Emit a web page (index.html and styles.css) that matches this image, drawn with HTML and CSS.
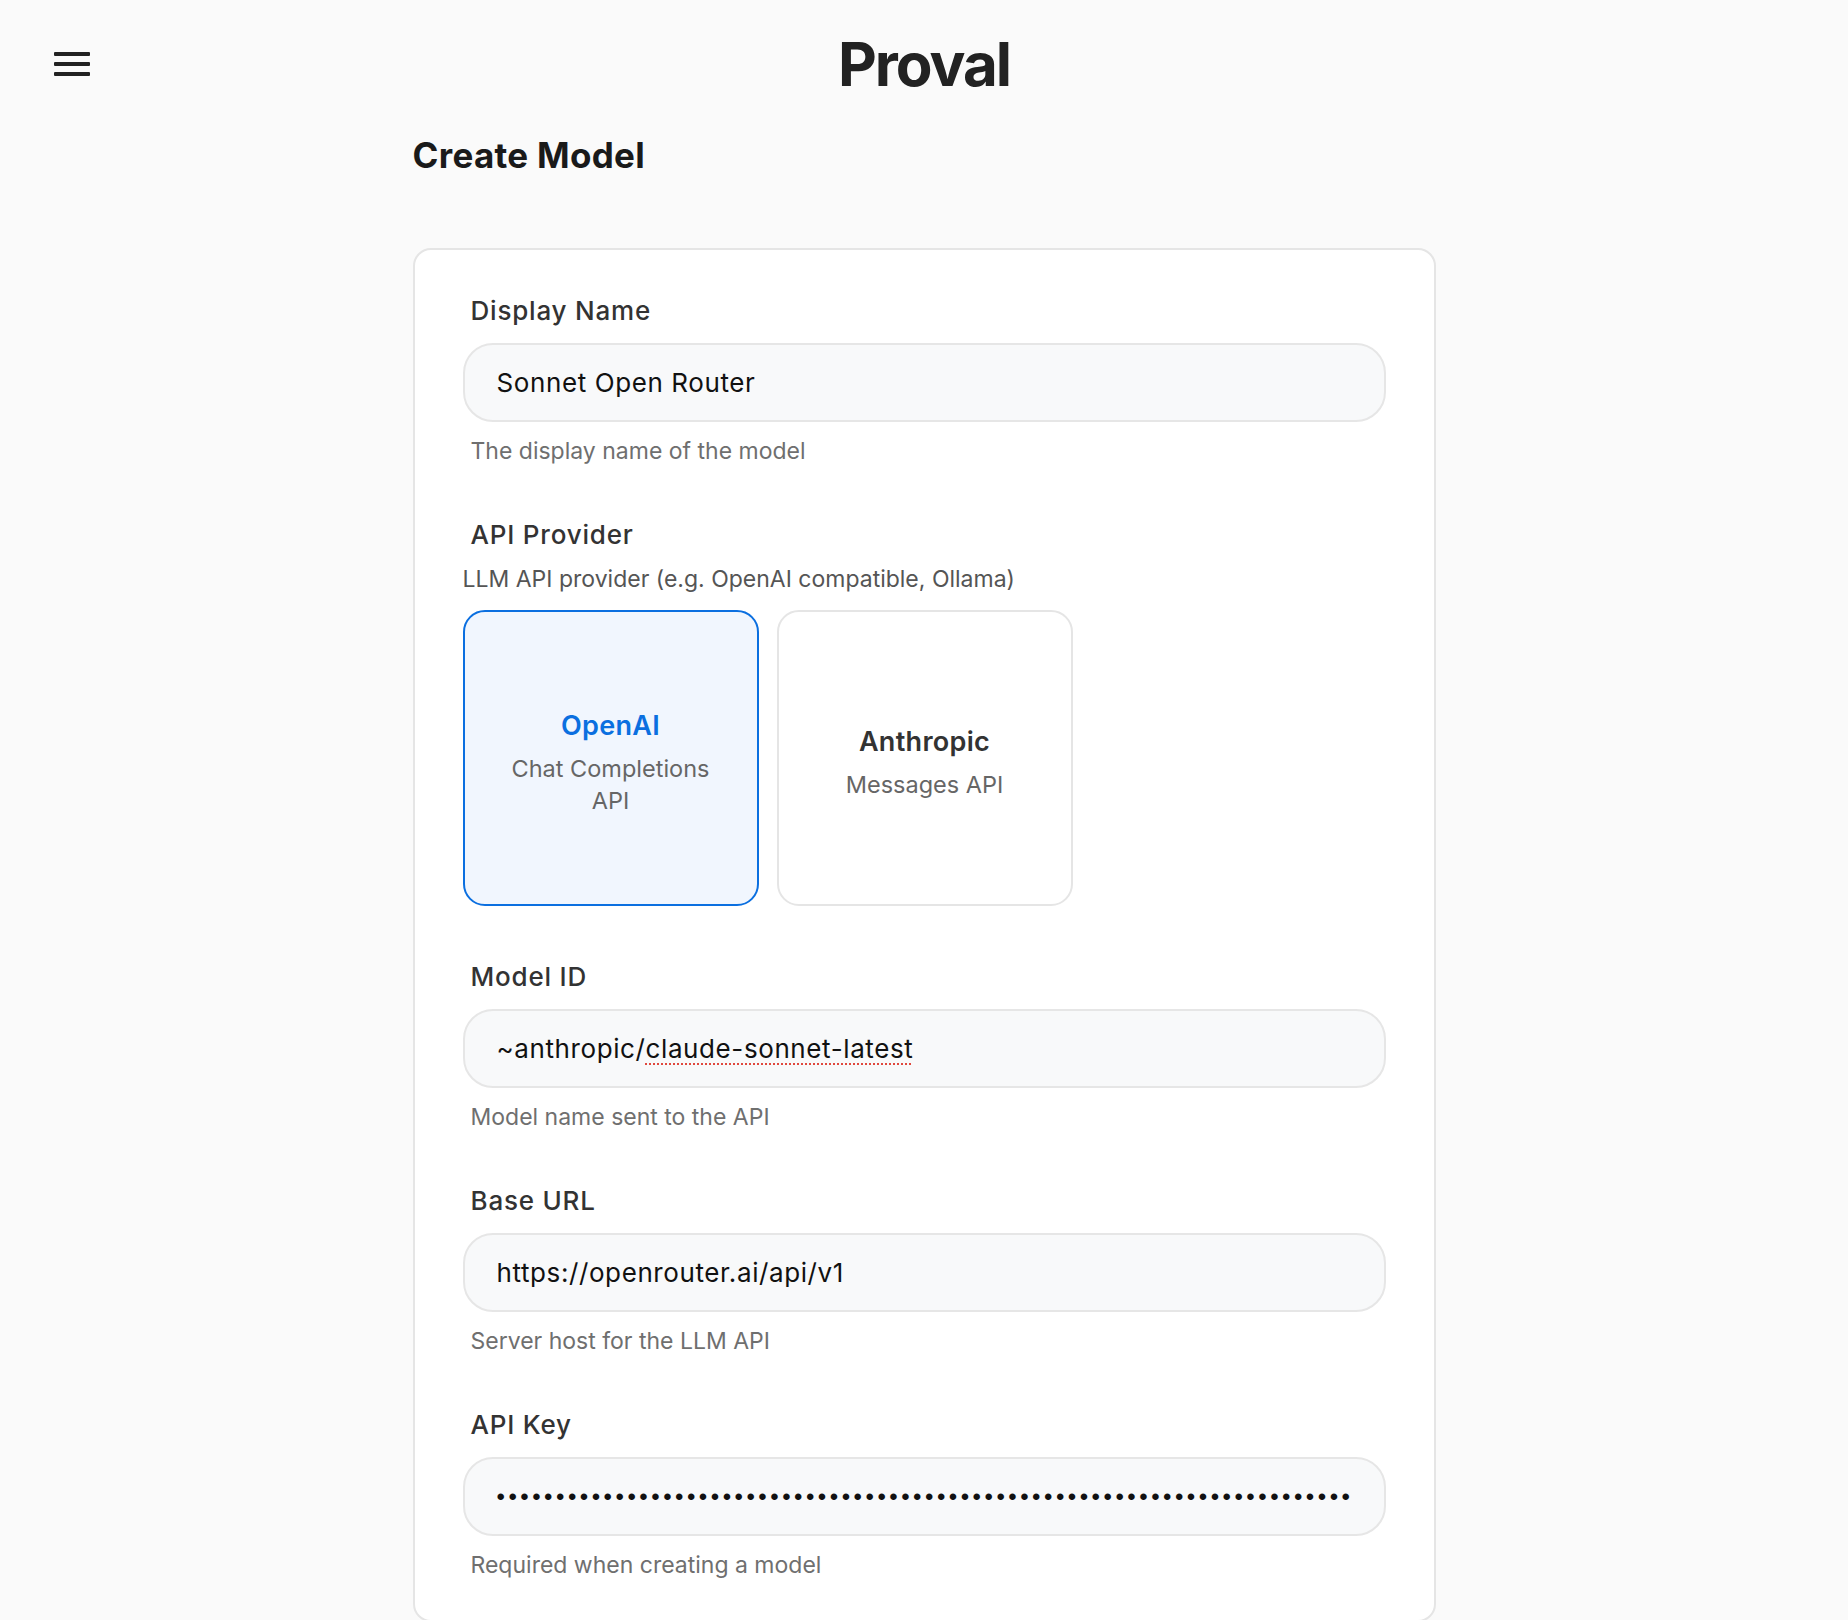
FILE: index.html
```html
<!DOCTYPE html>
<html lang="en">
<head>
  <meta charset="utf-8" />
  <meta name="viewport" content="width=device-width, initial-scale=1" />
  <title>Create Model - Proval</title>
  <link rel="stylesheet" href="styles.css">
</head>
<body>
<header class="topbar">
  <button class="menu-btn" type="button" aria-label="Menu">
    <svg width="36" height="24" viewBox="0 0 36 24" aria-hidden="true">
      <rect x="0" y="0" width="36" height="4" rx="1" />
      <rect x="0" y="10" width="36" height="4" rx="1" />
      <rect x="0" y="20" width="36" height="4" rx="1" />
    </svg>
  </button>
  <h1 class="brand">Proval</h1>
  <div></div>
</header>

<main class="page">
  <h2 class="page-title">Create Model</h2>

  <form class="form-card">
    <div class="field">
      <label class="field-label">Display Name</label>
      <div class="field-input">Sonnet Open Router</div>
      <p class="field-help">The display name of the model</p>
    </div>

    <div class="field">
      <label class="field-label">API Provider</label>
      <p class="field-desc">LLM API provider (e.g. OpenAI compatible, Ollama)</p>
      <div class="providers">
        <div class="provider provider--active">
          <span class="provider-name">OpenAI</span>
          <span class="provider-sub">Chat Completions API</span>
        </div>
        <div class="provider">
          <span class="provider-name">Anthropic</span>
          <span class="provider-sub">Messages API</span>
        </div>
      </div>
    </div>

    <div class="field">
      <label class="field-label">Model ID</label>
      <div class="field-input">~anthropic/<span class="misspelt">claude-sonnet-latest</span></div>
      <p class="field-help">Model name sent to the API</p>
    </div>

    <div class="field">
      <label class="field-label">Base URL</label>
      <div class="field-input">https://openrouter.ai/api/v1</div>
      <p class="field-help">Server host for the LLM API</p>
    </div>

    <div class="field">
      <label class="field-label">API Key</label>
      <div class="field-input field-input--secret">••••••••••••••••••••••••••••••••••••••••••••••••••••••••••••••••••••••••</div>
      <p class="field-help">Required when creating a model</p>
    </div>
  </form>
</main>
</body>
</html>
```

FILE: styles.css
```css
:root {
  --bg: #fafafa;
  --ink: #222;
  --label: #333;
  --muted: #6f6f6f;
  --line: #e5e5e5;
  --field: #f8f9fa;
  --blue: #0b6fe0;
  --blue-soft: #f1f6fe;
}
html {
  height: 100%;
}
body {
  margin: 0;
  background: var(--bg);
  color: var(--ink);
  font-family: Inter, "Noto Sans", sans-serif;
}

.topbar {
  display: grid;
  grid-template-columns: 1fr auto 1fr;
  align-items: center;
  padding-top: 28px;
}
.menu-btn {
  justify-self: start;
  margin-left: 54px;
  padding: 0;
  border: 0;
  background: none;
  cursor: pointer;
  line-height: 0;
}
.menu-btn svg {
  fill: var(--ink);
}
.brand {
  margin: 0;
  font-size: 60px;
  line-height: 72px;
  font-weight: 700;
  letter-spacing: -2px;
}

.page {
  width: 1023px;
  margin: 0 auto;
}
.page-title {
  margin: 35px 0 72px;
  font-size: 35px;
  line-height: 41px;
  font-weight: 700;
  letter-spacing: 0.3px;
  color: #1a1a1a;
}

.form-card {
  display: flex;
  flex-direction: column;
  gap: 54px;
  background: #fff;
  border: 2px solid var(--line);
  border-radius: 18px;
  padding: 46px 48px 40px;
}
.field {
  display: flex;
  flex-direction: column;
}
.field-label {
  padding-left: 8px;
  margin-bottom: 17px;
  font-size: 26px;
  line-height: 30px;
  font-weight: 500;
  letter-spacing: 0.8px;
  color: var(--label);
}
.field-input {
  box-sizing: border-box;
  height: 79px;
  display: flex;
  align-items: center;
  padding: 0 32px;
  border: 2px solid #e6e6e6;
  border-radius: 30px;
  background: var(--field);
  font-size: 26px;
  letter-spacing: 0.6px;
  color: #111;
  white-space: nowrap;
  overflow: hidden;
}
.field-input--secret {
  font-family: "Liberation Sans", Arial, sans-serif;
  font-size: 24px;
  letter-spacing: 3.5px;
}
.misspelt {
  text-decoration: underline dotted #e0483d;
  text-decoration-thickness: 2px;
  text-underline-offset: 5px;
}
.field-help {
  margin: 14px 0 0;
  padding-left: 8px;
  font-size: 23px;
  line-height: 30px;
  color: var(--muted);
}
.field-desc {
  margin: -3px 0 0;
  font-size: 23px;
  line-height: 30px;
  color: #555;
}

.providers {
  display: flex;
  gap: 18px;
  margin: 16px 0 2px;
}
.provider {
  box-sizing: border-box;
  width: 296px;
  height: 296px;
  display: flex;
  flex-direction: column;
  align-items: center;
  justify-content: center;
  padding: 9px 26px 0;
  text-align: center;
  border: 2px solid var(--line);
  border-radius: 22px;
  background: #fff;
  cursor: pointer;
}
.provider--active {
  border-color: var(--blue);
  background: var(--blue-soft);
}
.provider-name {
  font-size: 27px;
  line-height: 34px;
  font-weight: 600;
  letter-spacing: 0.3px;
  color: #333;
}
.provider--active .provider-name {
  color: var(--blue);
}
.provider-sub {
  margin-top: 10px;
  font-size: 23.5px;
  line-height: 32px;
  color: #666;
}
```
